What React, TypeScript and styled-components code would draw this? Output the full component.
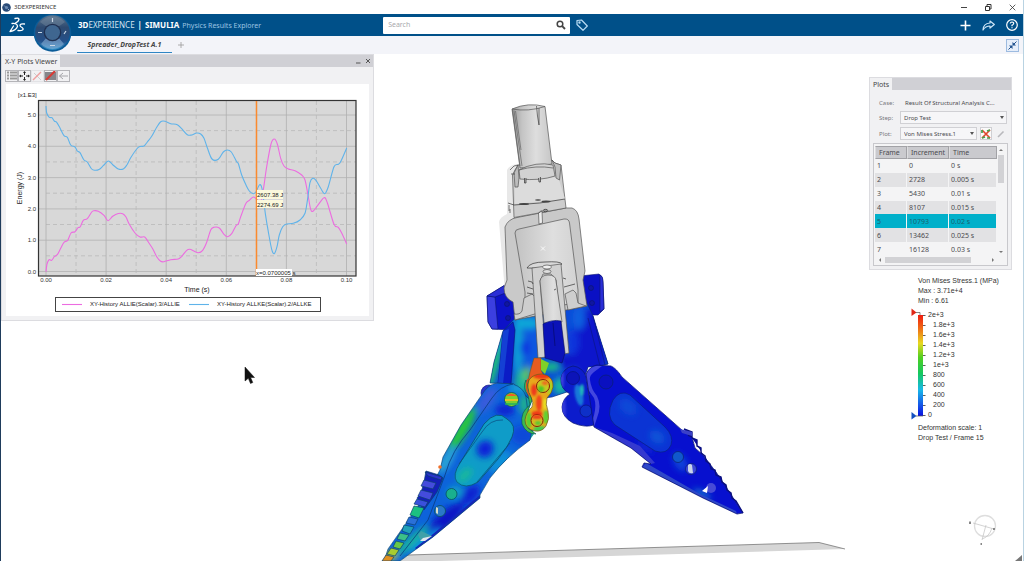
import React from "react";
import styled, { createGlobalStyle, css } from "styled-components";

const UI = `"Noto Sans", "Open Sans", sans-serif`;
const PLOT = `"Liberation Sans", Arial, sans-serif`;

const GlobalStyle = createGlobalStyle`
  *, *::before, *::after { box-sizing: border-box; }
  html, body { margin: 0; padding: 0; }
  body { background: #fff; color: #4b4b50; font: 7px/10px ${UI}; }
  button, input, select { font: inherit; color: inherit; margin: 0; }
  button { padding: 0; border: 0; background: none; display: inline-flex; align-items: center; justify-content: center; }
  svg { display: block; }
`;

const Window = styled.div`
  min-height: 100vh;
  display: flex;
  flex-direction: column;
  border-left: 1px solid #1f3c5c;
  border-right: 1px solid #b9d3e2;
`;

/* ---------- Title bar ---------- */
const TitleBar = styled.div`
  display: flex;
  align-items: center;
  height: 14px;
  padding: 0 3px 0 1px;
  gap: 3px;
  color: #333;
  font-size: 6px;
`;
const WindowButtons = styled.div`
  margin-left: auto;
  display: flex;
  gap: 8px;
`;
const WindowButton = styled.button`
  width: 16px;
  height: 12px;
`;

/* ---------- Header ---------- */
const Header = styled.header`
  position: relative;
  display: grid;
  grid-template-columns: 37% 20% 1fr;
  align-items: center;
  column-gap: 4px;
  height: 22px;
  background: #005089;
  color: #fff;
`;
const Brand = styled.div`
  display: flex;
  align-items: center;
  padding-left: 8px;
  white-space: nowrap;
`;
const BrandText = styled.h1`
  margin: 0 0 0 52px;
  display: flex;
  align-items: baseline;
  gap: 3px;
  font: 400 8px/12px ${UI};
  color: #d5e4f0;
`;
const Strong = styled.b`
  font-weight: 700;
  color: #fff;
`;
const AppName = styled.span`
  font-size: 7px;
  color: #9cc4e2;
`;
const CompassButton = styled.button`
  position: absolute;
  left: 32px;
  top: 0;
  width: 39px;
  height: 38px;
  z-index: 2;
`;
const SearchArea = styled.form`
  display: flex;
  align-items: center;
  gap: 6px;
`;
const SearchBox = styled.label`
  flex: 1;
  display: flex;
  align-items: center;
  height: 17px;
  padding: 0 4px 0 5px;
  background: #fff;
  border-radius: 1px;
`;
const SearchInput = styled.input`
  flex: 1;
  min-width: 0;
  border: 0;
  outline: 0;
  padding: 0;
  background: none;
  color: #555;
  &::placeholder { color: #a9a9ad; opacity: 1; }
`;
const HeaderActions = styled.nav`
  display: flex;
  justify-content: flex-end;
  gap: 11px;
  padding-right: 5px;
`;

/* ---------- Tabs ---------- */
const TabStrip = styled.div`
  display: flex;
  align-items: center;
  height: 18px;
  padding: 0 4px 0 76px;
  gap: 4px;
  background: #f3f4f9;
`;
const Tab = styled.button`
  && {
    height: 16px;
    width: 95px;
    border-bottom: 1px solid #2f86c4;
    font: italic 700 7px/14px ${UI};
    color: #444;
  }
`;
const AddTab = styled.button`
  width: 9px;
  height: 12px;
`;
const CollapseButton = styled.button`
  && {
    margin-left: auto;
    width: 13px;
    height: 13px;
    border: 1px solid #9dbbe0;
    background: #e6eefa;
  }
`;

/* ---------- Workspace ---------- */
const Workspace = styled.main`
  position: relative;
  flex: 1;
  display: flex;
  justify-content: space-between;
  align-items: flex-start;
`;
const SceneLayer = styled.svg`
  position: absolute;
  inset: 0;
  width: 100%;
  height: 100%;
`;
const Panel = styled.section`
  position: relative;
  background: #f1f1f3;
  border: 1px solid #dcdce0;
`;
const PlotPanel = styled(Panel)`
  width: 373px;
  padding-bottom: 4px;
`;
const PanelHead = styled.div`
  display: flex;
  align-items: stretch;
  height: 12px;
  background: #d0d0d5;
`;
const PanelTab = styled.h2`
  margin: 0;
  padding: 0 3px;
  background: #f1f1f3;
  font: 400 7px/13px ${UI};
  color: #444;
`;
const PanelButtons = styled.div`
  margin-left: auto;
  display: flex;
  align-items: center;
  gap: 2px;
  padding-right: 1px;
`;
const PanelButton = styled.button`
  width: 8px;
  height: 8px;
`;
const Toolbar = styled.div`
  display: flex;
  padding: 3px 3px 2px;
`;
const ToolButton = styled.button<{ $framed?: boolean }>`
  && {
    width: 13px;
    height: 12px;
    border: 1px solid ${(p) => (p.$framed ? "#b4b4b8" : "#e2e2e5")};
  }
`;
const ChartCard = styled.div`
  margin: 0 4px;
  background: #fff;
`;
const Chart = styled.svg`
  width: 100%;
  height: auto;
  font-family: ${PLOT};
`;

const Side = styled.aside`
  position: relative;
  width: 143px;
  margin: 23px 11px 0 0;
`;
const Field = styled.div`
  display: grid;
  grid-template-columns: 21px 1fr;
  align-items: center;
  margin-bottom: 3px;
`;
const FieldLabel = styled.label`
  color: #77777c;
  font-size: 6px;
`;
const CaseValue = styled.span`
  padding-left: 5px;
  font-size: 6px;
  white-space: nowrap;
`;
const Fields = styled.div`
  padding: 8px 4px 0 9px;
`;
const SelectRow = styled.div`
  display: flex;
  align-items: center;
  gap: 3px;
`;
const SelectWrap = styled.div`
  position: relative;
  flex: 1;
  height: 13px;
  &::after {
    content: "";
    position: absolute;
    right: 3px;
    top: 5px;
    border: 2px solid transparent;
    border-top: 3px solid #555;
    border-bottom: 0;
  }
`;
const Select = styled.select`
  appearance: none;
  display: block;
  width: 100%;
  height: 13px;
  padding: 0 8px 0 3px;
  border: 1px solid #d0d0d4;
  border-radius: 0;
  background: #f6f6f8;
  font-size: 6px;
`;
const IconButton = styled.button<{ $framed?: boolean }>`
  && {
    width: 12px;
    height: 13px;
    ${(p) => p.$framed && css`border: 1px solid #cfcfd3; background: #fafafa;`}
  }
`;
const TableBox = styled.div`
  margin: 0 3px 3px;
  padding: 2px 2px 1px 1px;
  border: 1px solid #c8c8cc;
  background: #f4f4f5;
`;
const TableRow = styled.div`
  display: flex;
`;
const FrameTable = styled.table`
  flex: 1;
  height: 110px;
  border-collapse: separate;
  border-spacing: 0;
  table-layout: fixed;
  font-size: 7px;
  line-height: 9px;
`;
const HeadCell = styled.th<{ $w?: number }>`
  ${(p) => p.$w && `width: ${p.$w}px;`}
  height: 13px;
  padding: 0 3px;
  background: #cacace;
  border: 1px solid #a2a2a6;
  border-left-color: #dedee0;
  font-weight: 400;
  text-align: left;
`;
const BodyRow = styled.tr<{ $selected?: boolean }>`
  &:nth-child(even) td { background: #e2e2e4; }
  ${(p) => p.$selected && css`&& td { background: #00b0ca; color: #1c6270; }`}
`;
const Cell = styled.td`
  padding: 0 2px;
  border-right: 1px solid #f4f4f5;
`;
const VScroll = styled.div`
  width: 8px;
  display: flex;
  flex-direction: column;
  align-items: center;
  justify-content: space-between;
  padding: 3px 0;
`;
const VThumb = styled.div`
  width: 6px;
  height: 28px;
  margin: 4px 0 auto;
  background: #d2d2d5;
`;
const HScroll = styled.div`
  display: flex;
  align-items: center;
  justify-content: space-between;
  height: 8px;
  padding: 0 11px 0 4px;
`;
const HThumb = styled.div`
  width: 86px;
  height: 6px;
  margin: 0 auto 0 4px;
  background: #d2d2d5;
`;
const Arrow = styled.i<{ $dir: "up" | "down" | "left" | "right" }>`
  width: 0;
  height: 0;
  border: 2px solid transparent;
  ${(p) => p.$dir === "up" && css`border-top: 0; border-bottom-color: #777;`}
  ${(p) => p.$dir === "down" && css`border-bottom: 0; border-top-color: #777;`}
  ${(p) => p.$dir === "left" && css`border-left: 0; border-right-color: #777;`}
  ${(p) => p.$dir === "right" && css`border-right: 0; border-left-color: #777;`}
`;

/* ---------- Stress legend ---------- */
const Legend = styled.section`
  margin: 6px 0 0 49px;
  font: 7px/10px ${PLOT};
  color: #333;
  white-space: nowrap;
`;
const LegendText = styled.p`
  margin: 0;
`;
const Scale = styled.div`
  display: flex;
  margin: 2px 0 3px;
`;
const ScaleBar = styled.svg`
  width: 16px;
  height: 112px;
  margin-left: -7px;
  overflow: visible;
`;
const ScaleLabels = styled.ol`
  list-style: none;
  margin: 2px 0 0;
  padding: 0;
`;
const ScaleLabel = styled.li<{ $end?: boolean }>`
  padding-left: ${(p) => (p.$end ? 1 : 6)}px;
`;

/* ---------- Chart data ---------- */
type Pt = [number, number];
const kinetic: Pt[] = [[46,106],[46.7,113],[49.3,117.3],[52,117.7],[54.3,121],[56.7,122.3],[60,128],[64,135.7],[67.3,137.3],[70.7,145],[75,147],[77.3,151],[80,152.7],[84,160],[87.3,162],[91.7,169],[95,170.3],[99,169.5],[103.3,165.7],[108.3,161],[112.7,164.7],[118.3,169],[123.3,169],[126.7,165.3],[130.7,157.7],[136.7,149],[140,146.5],[144,146],[147.3,142],[151.7,136.3],[156.7,127.3],[160.7,121.7],[165,121.3],[170.7,123.7],[177.3,124.7],[181.7,128.7],[187.3,134.7],[191.7,135],[196.7,133],[200.7,134],[204,138.3],[207.3,147.7],[212,159],[218.3,159.3],[223.3,152],[227.3,150],[231.3,152],[236.7,161.7],[238.5,164],[241.7,175],[246,185],[249.3,191],[253.3,193.7],[256,191.7],[259.7,184.7],[262.3,190],[265.3,213.3],[268.3,231.7],[271.7,249.3],[274.3,253.7],[277,246.7],[279.3,235],[282.7,226.7],[286.7,224],[293.3,223.3],[300,220],[305,213.3],[307.7,198.3],[310,182.7],[312.7,178.3],[316,180.3],[320.7,188.3],[324.7,193.7],[328.3,186.7],[334,166.7],[338.3,164.3],[341,161],[346.7,148]];
const internal: Pt[] = [[46,271.7],[47,264],[49,259.7],[51.7,260.3],[54.3,256.7],[57.3,254.7],[60.7,248.3],[64,242.3],[67.7,240.3],[71,233],[75,231.7],[78,227.7],[80.3,226.7],[83.3,220.3],[87.3,218.7],[91.7,212],[94,210.7],[98.3,211.3],[104,215.3],[108,220.7],[112.7,216.3],[118.3,213.5],[122.7,213.7],[126,217],[129.3,224.3],[135,233],[140,237],[144.7,237],[148.3,242],[152.7,248.7],[156.7,256.7],[160.7,261.3],[164,261.7],[170.7,259.7],[178.3,259],[181.7,256.3],[186.7,250.3],[190,249.3],[193.3,250.7],[198.3,252.7],[202.7,250.3],[206.7,242.3],[210.7,230],[214,227.3],[219.3,228],[224,234.3],[227.7,236.7],[231.7,233.7],[236,225.7],[238.3,224],[240.7,216.7],[246,203.3],[249.3,200.3],[253.3,197],[256.7,199.3],[260.7,203],[263.3,190],[266.7,166.7],[271,144],[274.3,139],[277.3,144],[280.7,158.3],[284,166],[288.3,169],[295,170.7],[301.7,175],[305,180],[308,195],[310.7,209.3],[313.3,211],[318.3,204.7],[324,197.7],[327.3,202.7],[334,224.3],[338.3,227.3],[341.7,233],[346.7,244]];

/* Catmull-Rom spline through the samples */
function smooth(p: Pt[]): string {
  let d = `M${p[0][0]} ${p[0][1]}`;
  for (let i = 0; i < p.length - 1; i++) {
    const a = p[i - 1] ?? p[i], b = p[i], c = p[i + 1], e = p[i + 2] ?? c;
    d += `C${b[0] + (c[0] - a[0]) / 6} ${b[1] + (c[1] - a[1]) / 6} ${c[0] - (e[0] - b[0]) / 6} ${c[1] - (e[1] - b[1]) / 6} ${c[0]} ${c[1]}`;
  }
  return d;
}

const PINK = "#ec6ce0";
const BLUE = "#5fb3ea";
const energyTicks = [5, 4, 3, 2, 1, 0];
const timeTicks = ["0.00", "0.02", "0.04", "0.06", "0.08", "0.10"];

function EnergyChart() {
  return (
    <Chart viewBox="6 84 363 232" role="img" aria-label="Energy over time">
      <rect x="38.5" y="100.5" width="317.5" height="175.5" fill="#d8d8d8" />
      {energyTicks.map((v, i) => {
        const y = 115 + i * 31.3;
        return (
          <g key={v}>
            <path d={`M38 ${y}H356`} stroke="#b3b3b3" strokeWidth=".8" />
            {i < 5 && <path d={`M46 ${y + 15.6}H356`} stroke="#b9b9b9" strokeWidth=".8" strokeDasharray="4 3" />}
            <text x="36" y={y + 2} fontSize="6" textAnchor="end" fill="#333">{v.toFixed(1)}</text>
          </g>
        );
      })}
      {timeTicks.map((t, i) => {
        const x = 46 + i * 60.1;
        return (
          <g key={t}>
            <path d={`M${x} 101V276`} stroke="#b0b0b0" strokeWidth=".8" />
            {i < 5 && <path d={`M${x + 30} 101V276`} stroke="#bababa" strokeWidth=".8" strokeDasharray="4 3" />}
            <text x={x} y="282" fontSize="6" textAnchor="middle" fill="#333">{t}</text>
          </g>
        );
      })}
      <rect x="38.5" y="100.5" width="317.5" height="175.5" fill="none" stroke="#333" strokeWidth="1.2" />
      <path d={smooth(internal)} fill="none" stroke={PINK} strokeWidth="1.1" />
      <path d={smooth(kinetic)} fill="none" stroke={BLUE} strokeWidth="1.1" />
      <path d="M256.5 101V276" stroke="#fb8a2e" strokeWidth="1.5" />
      <g fill="#fbf8dc">
        <rect x="257" y="190" width="26" height="9" />
        <rect x="257" y="200" width="26" height="8" />
      </g>
      <rect x="256" y="269" width="36" height="7" fill="#fff" />
      <g fontSize="6" fill="#222">
        <text x="257" y="197">2607.38 J</text>
        <text x="257" y="207">2274.69 J</text>
        <text x="256" y="275">x=0.0700005 s</text>
        <text x="18" y="97">[x1.E3]</text>
      </g>
      <g fontSize="7" fill="#222">
        <text x="197" y="292" textAnchor="middle">Time (s)</text>
        <text transform="translate(22 188) rotate(-90)" textAnchor="middle">Energy (J)</text>
      </g>
      <rect x="55.5" y="297.5" width="265" height="14" fill="#fff" stroke="#444" />
      <path d="M62 304.5H82" stroke={PINK} strokeWidth="1.1" />
      <path d="M189 304.5H209" stroke={BLUE} strokeWidth="1.1" />
      <g fontSize="6" fill="#222">
        <text x="90" y="306">XY-History ALLIE(Scalar).3/ALLIE</text>
        <text x="217" y="306">XY-History ALLKE(Scalar).2/ALLKE</text>
      </g>
    </Chart>
  );
}

/* ---------- 3D model ---------- */
const LEFT_JAW = "M481 396Q488 384 497 383L513 384Q524 388 526 397L528 412L532 430L530 440Q505 458 490 478L480 495V498L433 537L415 550L400 561H384L388 549L428 492L440 470L443 457L461 425Z";
const RIGHT_JAW = "M586 374Q590 366 597 365L611 366Q616 368 622 377L674 423L683 431L692 437L695 448L703 455L716 472L728 490L743 513L737 514L703 498L642 467L644 463L651 464L631 448L594 427Z";
const BODY = "M503 331L515 318L587 303L593 316L608 364L600 366L588 367Q586 375 578 388L570 391L552 397L530 400L514 384L490 383L494 362Z";
const LINK = "M529 380Q533 374 542 374Q554 376 553 387Q552 393 547 398Q545 404 548 411Q550 419 546 426Q542 432 535 431Q525 429 525 420Q526 412 532 407Q534 403 531 397Q526 388 529 380Z";
const RIGHT_LINK = "M561 378Q563 368 573 366Q582 367 586 376L589 395L597 403Q601 414 594 425Q585 428 573 423Q562 417 562 407Q563 398 570 394Q560 389 561 378Z";
const LEFT_SLOT = "M484 424Q497 409 507 419Q517 425 512 437Q508 447 498 459L478 482Q465 490 457 482Q452 475 460 463Z";
const RIGHT_SLOT = "M613 400Q620 389 630 395L665 427Q674 436 671 445Q667 455 655 451L615 425Q605 416 613 400Z";

interface BlobProps { at: [number, number, number, number]; color: string; turn?: number }
const Blob = ({ at, color, turn = 0 }: BlobProps) => (
  <ellipse cx={at[0]} cy={at[1]} rx={at[2]} ry={at[3]} fill={color} transform={`rotate(${turn} ${at[0]} ${at[1]})`} />
);

function Housing() {
  return (
    <g stroke="#555" strokeWidth=".7" strokeLinejoin="round">
      {/* far half, pale */}
      <path d="M499 222Q500 217 507 214V170Q510 164 520 164V290L505 292Z" fill="#e8e8e8" stroke="none" />
      {/* lower casing */}
      <path d="M505 227Q508 219 517 217.500L566 208H572Q578 210 579 219L585 271L583 280L587 306L515 320L513 302Q504 298 504 288L507 280Z" fill="#c9c9c9" />
      {/* neck */}
      <path d="M518 165L515 170L512.500 175L514 217.500L566 208L561 165L555 163L552 160Z" fill="#cdcdcd" />
      <path d="M514.500 188L518 187L519 179Q538 180 556 177L559 180L565 199L515 204Z" fill="#dcdcdc" stroke="none" />
      <path d="M508 203L514 205Q540 204 565 199" fill="none" stroke="#333" />
      <path d="M509 211V205M510 213V209" fill="none" stroke="#444" />
      {/* shaft */}
      <path d="M512 109Q528 102 545 106.500L552 164L520 168Z" fill="url(#steel)" />
      <path d="M512 109Q528 112 545 106.500" fill="none" />
      <path d="M512.500 110L520 166M514 110.500L522 166M515.500 111L521 150" stroke="#666" fill="none" />
      <path d="M536.500 106L537.500 116L539 125V108" fill="none" stroke="#444" />
      {/* collar */}
      <path d="M519 170Q536 161 553 165L555 176Q540 181 520 179Z" fill="#d2d2d2" />
      <path d="M519 170Q536 165 553 168" fill="none" />
      <path d="M518 165L519 178L518 187H515L514 173Z" fill="#bdbdbd" />
      <path d="M552 160L555 163L561 165L559.500 180L556 178L555 167Z" fill="#bdbdbd" />
      <path d="M510 170L514 166L518 165M511 174H515" fill="none" stroke="#444" />
      <path d="M524.500 178V183H526V178M538.500 178L539 182H540.500V177" fill="#bbb" stroke="#333" />
      <g fill="#444" stroke="none"><ellipse cx="524" cy="204" rx="5" ry="1" /><ellipse cx="538" cy="200" rx="3" ry=".8" /><ellipse cx="546" cy="201.500" rx="4.500" ry="1" /></g>
      <ellipse cx="545.500" cy="210.500" rx="2.200" ry="1.200" fill="#999" stroke="#333" />
      {/* cavity */}
      <path d="M515 233Q515 229.500 519 229L564 219Q569 218.500 569.500 223L578 290V303L525 310V292Z" fill="url(#cavity)" />
      <path d="M538.500 213L539 224L542.500 223L542 211Z" fill="#eee" />
      <path d="M538.500 213Q541 210 543 211" fill="none" />
      {/* seats either side of the piston */}
      <path d="M524 298L532 294L536 298L538 313L515 320L514 314Q520 315 522 311Z" fill="#cecece" />
      <path d="M565 294L573 290L576 293L578 303L586 306L568 310Z" fill="#cecece" />
      {/* piston */}
      <path d="M527 268Q530 262 545 262Q560 261 562 264Q558 269 527 268Z" fill="#d8d8d8" stroke="#333" />
      <path d="M532 268L561 264L569 353L564 354L556 280L551 274H543L540 281L546 357L538 358Z" fill="#d0d0d0" />
      <path d="M540 281Q541 275 548 275Q556 275 556 281L562 322L544 323Z" fill="url(#cavity)" />
      <ellipse cx="547" cy="267" rx="4.500" ry="2" fill="#eee" /><ellipse cx="547" cy="271.500" rx="4" ry="2" fill="#ddd" />
      <path d="M528 281L532 282L533 284M527 287L533 289M527 293L533 294M563 278L566 279M554 290L556 289M564 287L575 284" stroke="#333" fill="none" />
    </g>
  );
}

function Model() {
  return (
    <SceneLayer viewBox="1 54 1022 507" preserveAspectRatio="xMidYMax meet" role="img" aria-label="Spreader stress result">
      <defs>
        <filter id="soft" x="-50%" y="-50%" width="200%" height="200%"><feGaussianBlur stdDeviation="3" /></filter>
        <filter id="fine" x="-50%" y="-50%" width="200%" height="200%"><feGaussianBlur stdDeviation="1" /></filter>
        <linearGradient id="steel" x1="0" x2="1"><stop offset="0" stopColor="#9c9c9c" /><stop offset=".25" stopColor="#c4c4c4" /><stop offset=".6" stopColor="#dedede" /><stop offset="1" stopColor="#c6c6c6" /></linearGradient>
        <linearGradient id="cavity" x1="0" x2="1"><stop offset="0" stopColor="#c2c2c2" /><stop offset=".6" stopColor="#dfdfdf" /><stop offset="1" stopColor="#d2d2d2" /></linearGradient>
        <clipPath id="cBody"><path d={BODY} /></clipPath>
        <clipPath id="cLeft"><path d={LEFT_JAW} /></clipPath>
        <clipPath id="cRight"><path d={RIGHT_JAW} /></clipPath>
        <clipPath id="cLink"><path d={LINK} /></clipPath>
        <clipPath id="cRLink"><path d={RIGHT_LINK} /></clipPath>
      </defs>

      {/* ground plate */}
      <path d="M385 561L408 555L819 542.500L845 549L440 561Z" fill="#d6d6d6" />
      <path d="M408 555L819 542.500L845 549" fill="none" stroke="#777" strokeWidth=".8" />

      {/* mounting ears */}
      <g stroke="#0a1470" strokeWidth=".6" strokeLinejoin="round">
        <path d="M487 296L505 285L516 289L518 320L510 330L492 329L488 322Z" fill="#0d12c8" />
        <path d="M487 296L495 297L498 329L492 329L488 322Z" fill="#3b3fe0" />
        <path d="M487 296L505 285L516 289L495 297Z" fill="#2a2ed6" />
        <path d="M580 276L599 274Q603 276 603 282L604 309L598 315H592L608 364L590 366L580 320Z" fill="#0a10c4" />
        <path d="M600 275Q603 276 603 282L604 309L600 312Z" fill="#2a2ed6" />
        <g fill="#1016a0"><circle cx="507" cy="304" r="2.500" /><circle cx="508" cy="318" r="2.500" /><circle cx="591" cy="288" r="2.500" /><circle cx="592" cy="303" r="2.500" /></g>
      </g>

      {/* centre body */}
      <path d="M516 384L534 396L528 412L534 434L529 441L518 436Z" fill="#18a0a0" />
      <path d={BODY} fill="#0b4bd8" />
      <g clipPath="url(#cBody)">
        <g filter="url(#soft)">
          <Blob at={[495, 362, 4, 32]} color="#22d070" turn={14} />
          <Blob at={[497, 340, 4, 14]} color="#12a8dc" turn={14} />
          <Blob at={[518, 345, 5, 34]} color="#10a4d4" />
          <Blob at={[534, 345, 9, 30]} color="#0a58e0" />
          <Blob at={[522, 382, 8, 12]} color="#1cb49c" />
          <Blob at={[528, 323, 12, 6]} color="#10a8d8" />
          <Blob at={[525, 348, 5, 8]} color="#0a30e0" />
          <Blob at={[590, 345, 18, 36]} color="#0812cc" />
          <Blob at={[579, 318, 6, 12]} color="#1060e0" />
          <Blob at={[573, 342, 6, 12]} color="#0c34dc" />
          <Blob at={[566, 362, 12, 8]} color="#0a14c8" />
          <Blob at={[551, 367, 9, 4]} color="#1cc878" />
          <Blob at={[560, 386, 7, 9]} color="#18b8a0" />
          <Blob at={[527, 374, 3, 8]} color="#70d030" />
        </g>
        <path d="M503 331L513 322L515 330L511 384H498Z" fill="#0b1cc6" stroke="#0a1670" strokeWidth=".6" />
        <path d="M503 331L509 329L503 384H498Z" fill="#1440d4" />
      </g>
      <path d={BODY} fill="none" stroke="#0a2a70" strokeWidth=".6" />
      <path d="M588 318L600 366M593 316L605 365" stroke="#0a1678" strokeWidth=".6" />

      <Housing />
      <path d="M541 246.500L545 250.500M545 246.500L541 250.500" stroke="#fff" strokeWidth=".8" />
      <path d="M543 324Q552 319 561 321L565 353L562 363L545 358Z" fill="#0b12b8" stroke="#0a1060" strokeWidth=".6" />
      <path d="M553 323L555 346" stroke="#070c80" strokeWidth="1" />
      <path d="M534 358L541 358L541 370L544 376L528 381L530 372Z" fill="#e65c20" stroke="#6a5a10" strokeWidth=".5" />
      <path d="M541 359L549 363L545 374L541 370Z" fill="#7fd028" />

      {/* right links and jaw */}
      <path d={RIGHT_LINK} fill="#0c1ccc" stroke="#0a1670" strokeWidth=".7" />
      <g clipPath="url(#cRLink)">
        <g filter="url(#fine)">
          <Blob at={[579, 395, 4, 11]} color="#1878d8" turn={-12} />
          <Blob at={[582, 390, 2, 6]} color="#20b8b8" />
          <Blob at={[563, 409, 3, 12]} color="#3238d8" />
          <Blob at={[562, 379, 2, 10]} color="#3a40e0" />
        </g>
      </g>
      <circle cx="573" cy="378" r="6.500" fill="#0c14b8" stroke="#081070" strokeWidth=".6" />
      <circle cx="586" cy="411" r="6" fill="#0e30c8" stroke="#081070" strokeWidth=".6" />
      <g clipPath="url(#cRight)">
        <path d={RIGHT_JAW} fill="#0710cf" />
        <g filter="url(#soft)">
          <Blob at={[680, 462, 6, 10]} color="#0f45d8" turn={-30} />
          <Blob at={[645, 447, 10, 4]} color="#0c28d4" turn={30} />
          <Blob at={[702, 494, 10, 3]} color="#1478cc" turn={27} />
        </g>
        <path d="M584 376Q589 364 602 366L594 372Q589 376 590 380Q591 389 597 396Q602 406 597 418L593 430L590 427Q598 408 594 398L587 388Z" fill="#4347df" />
        <path d="M594 427L631 448L651 464L655 463L640 446L612 433Z" fill="#3439cf" />
        <path d="M642 467L703 498L737 514L736 511L700 494L646 463Z" fill="#2e48c8" />
      </g>
      <path d={RIGHT_JAW} fill="none" stroke="#0a1478" strokeWidth=".8" />
      <path d={RIGHT_SLOT} fill="#0b34d4" stroke="#092080" strokeWidth=".7" />
      <g filter="url(#soft)"><Blob at={[628, 407, 10, 7]} color="#0e48d8" turn={40} /><Blob at={[657, 437, 8, 6]} color="#0f54d8" turn={40} /></g>
      <path d="M684 429L692 432V437L688 435M692 438L697 440V446L701 448V453L705 456L706 461L710 464L711 469L715 470L716 475L721 477L722 482L726 485L727 490L731 493L732 498L736 501L743 513" fill="#0a10a4" stroke="#0a1080" strokeWidth="1.400" />
      <path d="M680 429L692 432V436L682 433Z" fill="#3a40c8" />
      <g stroke="#082070" strokeWidth=".7">
        <circle cx="606" cy="382" r="7" fill="#0a10c0" />
        <circle cx="678" cy="457" r="5.500" fill="#1058cc" />
        <circle cx="691" cy="469" r="5.500" fill="#3c48d8" />
        <circle cx="711" cy="488" r="5" fill="#474bd6" stroke="none" />
      </g>
      <path d="M688 465Q690 463 692 465L693 473Q689 474 688 471Z" fill="#c8d4ea" />
      <path d="M702 491L708 486L707 493Z" fill="#fff" />

      {/* left jaw */}
      <circle cx="489" cy="393" r="8" fill="#2a34cc" stroke="#0a1678" strokeWidth=".6" />
      <g clipPath="url(#cLeft)">
        <path d={LEFT_JAW} fill="#0d63da" />
        <g filter="url(#soft)">
          <Blob at={[462, 430, 6, 26]} color="#27c83c" turn={30} />
          <Blob at={[487, 400, 6, 15]} color="#3a5cdc" turn={35} />
          <Blob at={[447, 460, 5, 16]} color="#2aa6d4" turn={30} />
          <Blob at={[505, 410, 10, 6]} color="#0a20d0" />
          <Blob at={[518, 388, 10, 5]} color="#12a0d4" />
          <Blob at={[524, 404, 4, 10]} color="#20c080" />
          <Blob at={[523, 435, 12, 10]} color="#0e48d8" />
          <Blob at={[500, 462, 8, 14]} color="#1090d8" turn={45} />
          <Blob at={[470, 495, 12, 7]} color="#0a24d0" turn={-45} />
          <Blob at={[445, 520, 24, 8]} color="#0818c4" turn={-42} />
          <Blob at={[455, 492, 8, 6]} color="#10a0c8" />
          <Blob at={[412, 541, 22, 5]} color="#18b0a0" turn={-42} />
          <Blob at={[425, 541, 20, 4]} color="#1090e0" turn={-38} />
          <Blob at={[390, 556, 6, 5]} color="#c8d020" />
        </g>
        <path d="M480 495L433 534L415 548L418 551L436 539L481 500Z" fill="#1626b8" />
      </g>
      <path d={LEFT_JAW} fill="none" stroke="#0c4a78" strokeWidth=".7" />
      <path d="M513 384Q500 386 492 398L470 430Q452 450 445 475L428 520L400 556" fill="none" stroke="#0a3c80" strokeWidth=".8" />
      <path d={LEFT_SLOT} fill="#0f9cc8" stroke="#08506e" strokeWidth=".8" />
      <g filter="url(#soft)"><Blob at={[485, 449, 9, 8]} color="#0722d8" turn={-45} /><Blob at={[465, 475, 9, 5]} color="#18b89c" turn={-45} /></g>
      <path d="M510 443L477 482M503 420Q490 419 482 432L459 464" fill="none" stroke="#084a80" strokeWidth=".7" />
      <g stroke="#0a4070" strokeWidth=".7">
        <path d="M426 471L439 475L443 478L437 492L424 510L420 504L417 498L421 493L424 482Z" fill="#1420b8" />
        <path d="M425 472L442 477L441 480L428 476Z" fill="#2c34cc" />
        <path d="M424 480L436 483L433 489L421 486Z" fill="#444cdc" />
        <path d="M421 490L433 493L430 500L418 496Z" fill="#444cdc" />
        <path d="M417 499L428 502L425 507L414 504Z" fill="#3a50dc" />
        <path d="M414 506L424 508L419 518L410 515Z" fill="#1cc080" />
        <path d="M409 517L418 519L415 525L406 523Z" fill="#2a70d8" />
        <path d="M404 525L414 527L410 534L402 531Z" fill="#20a0b8" />
        <path d="M400 533L409 535L405 541L397 539Z" fill="#3cc088" />
        <path d="M396 541L404 543L400 549L393 547Z" fill="#68c848" />
        <path d="M391 548L399 550L395 556L387 554Z" fill="#a8cc30" />
        <path d="M386 555L394 557L391 561H382Z" fill="#e09020" />
      </g>
      <circle cx="440" cy="467" r="1.800" fill="#f0702a" />
      <g stroke="#085060" strokeWidth=".8">
        <circle cx="511.500" cy="399.500" r="7" fill="#7cd030" />
        <circle cx="451.500" cy="494" r="5.500" fill="#19b08e" />
        <circle cx="440" cy="511" r="5.500" fill="#2a78c8" />
      </g>
      <path d="M506 396Q511 391 517 396Z" fill="#f06020" />
      <path d="M505 400H518" stroke="#e8c020" strokeWidth="2" />
      <path d="M505 404H518" stroke="#22b060" strokeWidth="1.500" />
      <path d="M436 507L438 508V514L436 513Z" fill="#d8dcc8" />
      <path d="M418 535L421 531L432 536L421 541Z" fill="#3fa0a8" /><path d="M423 538L432 536L425 541L420 541Z" fill="#dfe8f0" />

      {/* hot link */}
      <path d="M526 380Q522 388 528 395L530 405Q520 412 522 424Q526 434 536 434L528 428V410L532 400Z" fill="#3cb850" stroke="#0d5050" strokeWidth=".6" />
      <path d="M528 379Q524 388 530 396" fill="none" stroke="#e04a20" strokeWidth="1.500" />
      <g clipPath="url(#cLink)">
        <path d={LINK} fill="#e8a81c" />
        <g filter="url(#fine)">
          <Blob at={[542, 376, 9, 3]} color="#f03818" />
          <Blob at={[534, 390, 3, 6]} color="#ee3a1c" />
          <Blob at={[550, 388, 3, 7]} color="#a8d420" />
          <Blob at={[539, 403, 3, 8]} color="#f0441c" />
          <Blob at={[545, 404, 2, 6]} color="#e8e020" />
          <Blob at={[529, 420, 3, 8]} color="#58d030" />
          <Blob at={[540, 429, 7, 3]} color="#40cc50" />
          <Blob at={[546, 417, 3, 7]} color="#60d030" />
          <Blob at={[537, 414, 6, 3]} color="#f03818" />
        </g>
      </g>
      <path d={LINK} fill="none" stroke="#6a5a14" strokeWidth=".7" />
      <g stroke="#8a1808" strokeWidth="1">
        <circle cx="543" cy="386" r="6.500" fill="#c8c822" /><circle cx="537" cy="420.500" r="6" fill="#d8b820" />
      </g>
      <g filter="url(#fine)">
        <Blob at={[541, 389, 3, 3]} color="#50c828" /><Blob at={[545, 383, 3, 2]} color="#f06820" />
        <Blob at={[537, 417, 5, 2]} color="#f03c1c" /><Blob at={[538, 423, 3, 2]} color="#58c830" />
      </g>

      {/* orientation gizmo */}
      <g fill="none" stroke="#dedede" strokeWidth="1.300">
        <circle cx="985" cy="526" r="10.500" />
        <path d="M973 523L994 529M986 525L982 540M992 528Q989 537 982 539" stroke="#c8c8c8" strokeWidth=".8" />
      </g>
      <g fill="#888"><path d="M969 521.500h2v2.500h-2zM993 528h2v2h-2zM980.500 543h1.500v2h-1.500z" /></g>
      <path d="M1015 561L1022 555V561Z" fill="#777" />

      {/* pointer */}
      <path d="M245 367V381L248.300 378.300L250.500 383.500L252.800 382.500L250.600 377.500H254.500Z" fill="#111" stroke="#111" strokeWidth=".5" />
    </SceneLayer>
  );
}

const frames = [
  [1, 0, "0 s"], [2, 2728, "0.005 s"], [3, 5430, "0.01 s"], [4, 8107, "0.015 s"],
  [5, 10793, "0.02 s"], [6, 13462, "0.025 s"], [7, 16128, "0.03 s"],
];
const scale = ["2e+3", "1.8e+3", "1.6e+3", "1.4e+3", "1.2e+3", "1e+3", "800", "600", "400", "200", "0"];

export default function App() {
  return (
    <Window>
      <GlobalStyle />
      <TitleBar>
        <svg width="9" height="9" viewBox="0 0 9 9"><circle cx="4.500" cy="4.500" r="4.300" fill="#294b78" /><circle cx="4.500" cy="4.500" r="1.600" fill="#6c8db5" /><path d="M2 2.500L3 3.500M6 6L7 7" stroke="#a9bdd6" /></svg>
        <span>3DEXPERIENCE</span>
        <WindowButtons>
          <WindowButton aria-label="Minimize"><svg width="6" height="6"><path d="M0 3.500H6" stroke="#444" /></svg></WindowButton>
          <WindowButton aria-label="Restore"><svg width="7" height="7" fill="none" stroke="#333"><path d="M.5 2.500H4.500V6.500H.5ZM2 2V.5H6V5H5" /></svg></WindowButton>
          <WindowButton aria-label="Close"><svg width="7" height="7" stroke="#333" strokeWidth=".8"><path d="M.7 .7L6.300 6.300M6.300 .7L.7 6.300" /></svg></WindowButton>
        </WindowButtons>
      </TitleBar>

      <Header>
        <Brand>
          <svg width="17" height="17" viewBox="0 0 17 17" fill="none" stroke="#fff" strokeWidth="1.300" strokeLinecap="round" strokeLinejoin="round" aria-label="Dassault Systemes">
            <path d="M6 1.500Q10 .5 10 2.500Q9.500 4.500 6.500 6M3 6.500Q8.500 6 8.500 9.500Q7 13.500 1 14.500L4.500 9" />
            <path d="M15.500 7Q11 6.500 11 8.500Q11 9.500 13 10.500Q15 12 13.500 13Q12 14 9 13.500" />
          </svg>
          <BrandText>
            <span><Strong>3D</Strong>EXPERIENCE</span><Strong>|</Strong><Strong>SIMULIA</Strong><AppName>Physics Results Explorer</AppName>
          </BrandText>
        </Brand>
        <CompassButton aria-label="Compass">
          <svg width="39" height="38" viewBox="0 0 39 38">
            <defs><linearGradient id="ring" y2="1" x2="0"><stop offset="0" stopColor="#5b7690" /><stop offset=".35" stopColor="#2e4a70" /><stop offset=".75" stopColor="#24508a" /><stop offset="1" stopColor="#3a9ad0" /></linearGradient></defs>
            <circle cx="19.500" cy="19" r="18.800" fill="#0b5c98" />
            <circle cx="19.500" cy="18.500" r="17.300" fill="url(#ring)" />
            <path d="M8 30L14 23A8 8 0 0 0 25 23L31 30A16 16 0 0 1 8 30Z" fill="#8fb4d8" opacity=".55" />
            <path d="M7 8A17 17 0 0 1 32 8L25 13A8 8 0 0 0 14 13Z" fill="#8797a8" opacity=".35" />
            <circle cx="19.500" cy="18.500" r="8.800" fill="#1f2f50" />
            <circle cx="19.500" cy="18.500" r="7.500" fill="#3f6690" />
            <g stroke="#c9d6e4" strokeWidth="1.200"><path d="M19.500 4V8M5 18.500H9M31 20L33 17M17 31.500H22" /></g>
          </svg>
        </CompassButton>
        <SearchArea role="search">
          <SearchBox>
            <SearchInput placeholder="Search" aria-label="Search" />
            <svg width="10" height="10" viewBox="0 0 10 10" fill="none" stroke="#444" strokeWidth="1.500"><circle cx="4" cy="4" r="2.800" /><path d="M6.200 6.200L9 9" strokeWidth="1.900" /></svg>
          </SearchBox>
          <button type="button" aria-label="Tags"><svg width="12" height="12" viewBox="0 0 12 12" fill="none" stroke="#b8dcf4" strokeWidth="1.200" strokeLinejoin="round"><path d="M1 1.500L5.500 1L11.300 7L7 11.300L1 5.500Z" /><circle cx="3.500" cy="3.500" r=".6" /></svg></button>
        </SearchArea>
        <HeaderActions>
          <button aria-label="Add"><svg width="11" height="11" stroke="#fff" strokeWidth="1.600"><path d="M5.500 .5V10.500M.5 5.500H10.500" /></svg></button>
          <button aria-label="Share"><svg width="13" height="11" viewBox="0 0 13 11" fill="none" stroke="#cfe6f7" strokeWidth="1.200" strokeLinejoin="round"><path d="M8 1L12.300 4.500L8 8V6Q3.500 6 1 10Q1.200 3.500 8 3Z" /></svg></button>
          <button aria-label="Help"><svg width="12" height="12" viewBox="0 0 12 12" fill="none" stroke="#fff" strokeWidth="1.200"><circle cx="6" cy="6" r="5.300" /><path d="M4.200 4.500Q4.500 3 6 3Q7.800 3.100 7.700 4.500Q7.500 5.500 6 6.200V7.200M6 8.200V9.300" /></svg></button>
        </HeaderActions>
      </Header>

      <TabStrip>
        <Tab>Spreader_DropTest A.1</Tab>
        <AddTab aria-label="New tab"><svg width="6" height="6" stroke="#999" strokeWidth=".8"><path d="M3 0V6M0 3H6" /></svg></AddTab>
        <CollapseButton aria-label="Collapse"><svg width="9" height="9" viewBox="0 0 9 9" stroke="#1d4f8c" fill="#1d4f8c"><path d="M.5 8.500L3 6M8.500 .5L6 3" /><path d="M1 4.500H4.500V8ZM4.500 1V4.500H8Z" stroke="none" /></svg></CollapseButton>
      </TabStrip>

      <Workspace>
        <Model />
        <PlotPanel>
          <PanelHead>
            <PanelTab>X-Y Plots Viewer</PanelTab>
            <PanelButtons>
              <PanelButton aria-label="Minimize panel"><svg width="6" height="6"><path d="M1 5H5.500" stroke="#555" /></svg></PanelButton>
              <PanelButton aria-label="Close panel"><svg width="6" height="6" stroke="#555"><path d="M1 1L5 5M5 1L1 5" /></svg></PanelButton>
            </PanelButtons>
          </PanelHead>
          <Toolbar>
            <ToolButton $framed aria-label="Curve list"><svg width="11" height="10" stroke="#999"><path d="M1 1.500H3M1 4.500H3M1 7.500H3M4 1.500H11M4 4.500H11M4 7.500H11" strokeWidth="1.800" /></svg></ToolButton>
            <ToolButton $framed aria-label="Fit"><svg width="11" height="10" viewBox="0 0 11 10" fill="#222"><path d="M5.500 0L7 2H4ZM5.500 10L7 8H4ZM0 5L2 3.500V6.500ZM11 5L9 3.500V6.500ZM5 2H6V4H5ZM5 6H6V8H5ZM2 4.500H4V5.500H2ZM7 4.500H9V5.500H7Z" /></svg></ToolButton>
            <ToolButton aria-label="Delete curve"><svg width="11" height="10"><path d="M2 2L9 9" stroke="#ccc" /><path d="M1 9L9 1" stroke="#f0a0a0" strokeWidth="1.500" /></svg></ToolButton>
            <ToolButton $framed aria-label="Hide cursor"><svg width="11" height="10"><rect y="1" width="11" height="8" fill="#85858a" /><path d="M1 9L10 0" stroke="#d83a34" strokeWidth="2" /></svg></ToolButton>
            <ToolButton $framed aria-label="Back"><svg width="11" height="10" stroke="#a6a6aa" fill="none"><path d="M1.500 5H10M5 2L1.500 5L5 8" /></svg></ToolButton>
          </Toolbar>
          <ChartCard><EnergyChart /></ChartCard>
        </PlotPanel>

        <Side>
          <Panel>
            <PanelHead><PanelTab>Plots</PanelTab></PanelHead>
            <Fields>
              <Field><FieldLabel as="span">Case:</FieldLabel><CaseValue>Result Of Structural Analysis C...</CaseValue></Field>
              <Field>
                <FieldLabel htmlFor="step">Step:</FieldLabel>
                <SelectWrap><Select id="step"><option>Drop Test</option></Select></SelectWrap>
              </Field>
              <Field>
                <FieldLabel htmlFor="plot">Plot:</FieldLabel>
                <SelectRow>
                  <SelectWrap><Select id="plot"><option>Von Mises Stress.1</option></Select></SelectWrap>
                  <IconButton $framed aria-label="Deselect result"><svg width="10" height="10" viewBox="0 0 10 10" strokeWidth="1.700"><path d="M1 1L9 9M9 1L1 9" stroke="#e0482e" /><path d="M1 4V1M6 9H9M6 2L9 1M1 9L4 8" stroke="#46a04c" /></svg></IconButton>
                  <IconButton aria-label="Edit plot"><svg width="8" height="8"><path d="M1 7L6.500 1.500" stroke="#b8b8bc" strokeWidth="1.600" /></svg></IconButton>
                </SelectRow>
              </Field>
            </Fields>
            <TableBox>
              <TableRow>
                <FrameTable>
                  <thead><tr><HeadCell $w={32}>Frame</HeadCell><HeadCell $w={42}>Increment</HeadCell><HeadCell>Time</HeadCell></tr></thead>
                  <tbody>
                    {frames.map(([f, inc, t]) => (
                      <BodyRow key={f} $selected={f === 5}><Cell>{f}</Cell><Cell>{inc}</Cell><Cell>{t}</Cell></BodyRow>
                    ))}
                  </tbody>
                </FrameTable>
                <VScroll><Arrow $dir="up" /><VThumb /><Arrow $dir="down" /></VScroll>
              </TableRow>
              <HScroll><Arrow $dir="left" /><HThumb /><Arrow $dir="right" /></HScroll>
            </TableBox>
          </Panel>

          <Legend>
            <LegendText>Von Mises Stress.1 (MPa)</LegendText>
            <LegendText>Max : 3.71e+4</LegendText>
            <LegendText>Min : 6.61</LegendText>
            <Scale>
              <ScaleBar viewBox="0 0 16 112">
                <defs><linearGradient id="rainbow" x2="0" y2="1"><stop offset="0" stopColor="#f01c10" /><stop offset=".12" stopColor="#f06414" /><stop offset=".28" stopColor="#e8d820" /><stop offset=".42" stopColor="#50d020" /><stop offset=".58" stopColor="#14c860" /><stop offset=".74" stopColor="#18b8e8" /><stop offset=".9" stopColor="#1450e8" /><stop offset="1" stopColor="#0a10e0" /></linearGradient></defs>
                <rect x="7" y="7" width="5" height="101" fill="url(#rainbow)" />
                {scale.map((s, i) => <path key={s} d={`M12 ${7.5 + i * 10}h2.500`} stroke="#333" strokeWidth=".8" />)}
                <path d="M.5 .5V8L5.500 4.500Z" fill="#e02818" /><path d="M5 4.500H9V7" fill="none" stroke="#555" strokeWidth=".7" />
                <path d="M.5 104V111.500L5.500 108Z" fill="#1450c0" /><path d="M5 108H12" stroke="#555" strokeWidth=".7" />
              </ScaleBar>
              <ScaleLabels>
                {scale.map((s, i) => <ScaleLabel key={s} $end={i === 0 || i === scale.length - 1}>{s}</ScaleLabel>)}
              </ScaleLabels>
            </Scale>
            <LegendText>Deformation scale: 1</LegendText>
            <LegendText>Drop Test / Frame 15</LegendText>
          </Legend>
        </Side>
      </Workspace>
    </Window>
  );
}
